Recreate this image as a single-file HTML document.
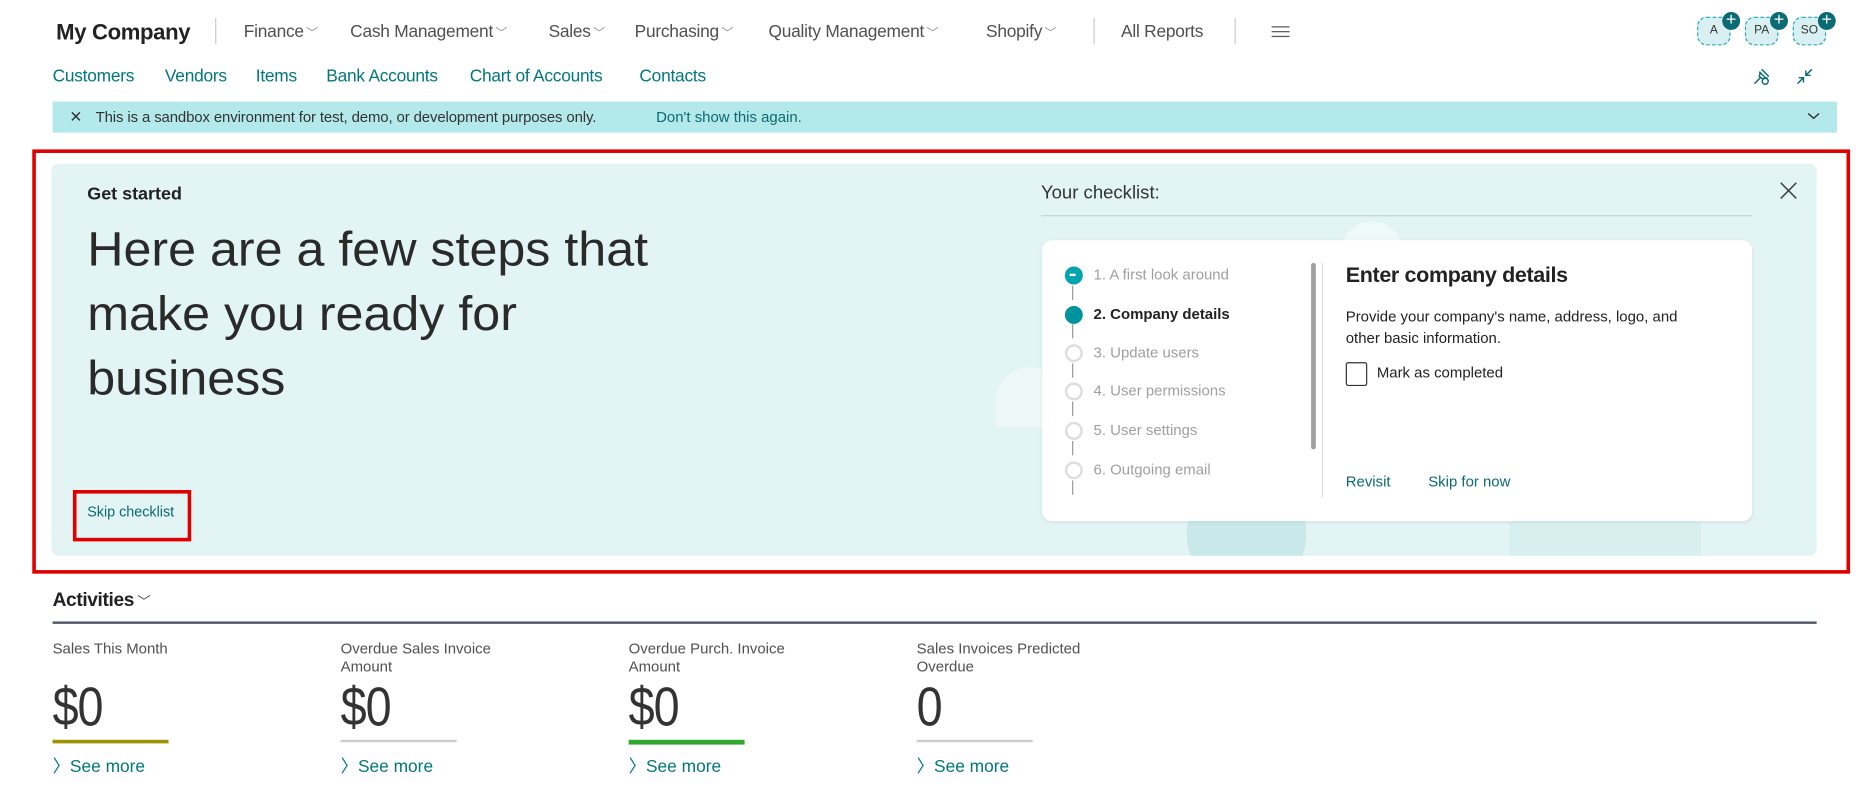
<!DOCTYPE html>
<html><head><meta charset="utf-8"><style>
html,body{margin:0;padding:0;background:#fff;overflow:hidden;width:1874px;height:789px}
#w{position:absolute;left:0;top:0;width:1568px;height:660px;transform:scale(1.19515);transform-origin:0 0;font-family:"Liberation Sans",sans-serif;color:#212121}
.a{position:absolute;white-space:nowrap}
.m{font-size:14.5px;color:#505050;top:19px;letter-spacing:-0.2px}
.m i{font-style:normal;font-size:10px;color:#888;margin-left:2px}
.n{font-size:14.5px;color:#00777d;top:56px;letter-spacing:-0.2px}
.sep{position:absolute;width:1px;background:#ccc;top:15px;height:22px}
.st{font-size:12.5px;color:#a0a0a0;left:915px}
.c{position:absolute;left:891px;width:11px;height:11px;border:2px solid #ddd;border-radius:50%;background:#fff}
.ln{position:absolute;left:897px;width:1px;height:12px;background:#999}
.lab{font-size:12.5px;color:#505050;top:536px}
.val{font-size:46px;color:#333;top:564px;letter-spacing:-1px;transform:scaleX(.85);transform-origin:0 0}
.bar{position:absolute;top:619px;width:97px;height:2px;background:#ccc}
.sm{font-size:14.5px;color:#00777d;top:630px}
.av{position:absolute;top:14px;width:26px;height:22px;background:#d9f0f2;border:1px dashed #1aaab8;border-radius:8px;font-size:10px;color:#333;text-align:center;line-height:22px}
.pl{position:absolute;top:-5px;right:-9px;width:15px;height:15px;border-radius:50%;background:#0b6a72;color:#fff;font-size:15px;line-height:14px;text-align:center}
</style></head><body><div id="w">
<div class="a" style="left:47px;top:16px;font-size:18.5px;font-weight:bold;color:#222;letter-spacing:-0.3px">My Company</div>
<div class="sep" style="left:180px"></div>
<div class="a m" style="left:204px">Finance<i>﹀</i></div>
<div class="a m" style="left:293px">Cash Management<i>﹀</i></div>
<div class="a m" style="left:459px">Sales<i>﹀</i></div>
<div class="a m" style="left:531px">Purchasing<i>﹀</i></div>
<div class="a m" style="left:643px">Quality Management<i>﹀</i></div>
<div class="a m" style="left:825px">Shopify<i>﹀</i></div>
<div class="sep" style="left:915px"></div>
<div class="a m" style="left:938px">All Reports</div>
<div class="sep" style="left:1033px"></div>
<div class="a" style="left:1064px;top:22px;width:15px;height:1px;background:#555;box-shadow:0 4px 0 #555,0 8px 0 #555"></div>
<div class="av" style="left:1420px">A<div class="pl">+</div></div>
<div class="av" style="left:1460px">PA<div class="pl">+</div></div>
<div class="av" style="left:1500px">SO<div class="pl">+</div></div>
<div class="a n" style="left:44px">Customers</div>
<div class="a n" style="left:138px">Vendors</div>
<div class="a n" style="left:214px">Items</div>
<div class="a n" style="left:273px">Bank Accounts</div>
<div class="a n" style="left:393px">Chart of Accounts</div>
<div class="a n" style="left:535px">Contacts</div>
<svg class="a" style="left:1466px;top:56px" width="16" height="16" viewBox="0 0 16 16" fill="none" stroke="#0b6a72" stroke-width="1.2"><path d="M2 14l5-5M6 4l6 6M8 2l6 6M7 4l-1 4 3 2 4-1"/><circle cx="11" cy="12" r="2.5"/></svg>
<svg class="a" style="left:1502px;top:56px" width="16" height="16" viewBox="0 0 16 16" fill="none" stroke="#0b6a72" stroke-width="1.2"><path d="M14 2l-5 5M9 3v4h4M2 14l5-5M3 9h4v4"/></svg>
<div class="a" style="left:44px;top:85px;width:1493px;height:26px;background:#b3e9ea"></div>
<div class="a" style="left:58px;top:90px;font-size:13px;color:#333">✕</div>
<div class="a" style="left:80px;top:91px;font-size:12.5px;color:#333;letter-spacing:-0.1px">This is a sandbox environment for test, demo, or development purposes only.</div>
<div class="a" style="left:549px;top:91px;font-size:12.5px;color:#0b6a72">Don't show this again.</div>
<svg class="a" style="left:1512px;top:93px" width="11" height="8"><path d="M1 2l4.5 4L10 2" stroke="#333" fill="none" stroke-width="1.2"/></svg>
<div class="a" style="left:27px;top:125px;width:1515px;height:349px;border:3px solid #e00000"></div>
<div class="a" style="left:43px;top:137px;width:1477px;height:328px;background:#e3f4f4;border-radius:6px;overflow:hidden">
 <div class="a" style="left:1080px;top:48px;width:50px;height:50px;border-radius:50%;background:#eef9f9"></div>
 <div class="a" style="left:790px;top:170px;width:60px;height:50px;border-radius:30px 30px 0 0;background:#eef8f8"></div>
 <div class="a" style="left:950px;top:260px;width:100px;height:100px;border-radius:50%;background:#c8e8e9"></div>
 <div class="a" style="left:1220px;top:290px;width:160px;height:40px;background:#d8efef"></div>
</div>
<div class="a" style="left:73px;top:154px;font-size:15px;font-weight:bold;color:#222">Get started</div>
<div class="a" style="left:73px;top:182px;font-size:40px;color:#2a2a2a;line-height:54px;white-space:nowrap;transform:scaleX(1.05);transform-origin:0 0">Here are a few steps that<br>make you ready for<br>business</div>
<div class="a" style="left:61px;top:410px;width:93px;height:37px;border:3px solid #e00000"></div>
<div class="a" style="left:73px;top:421px;font-size:12px;color:#0b6a72">Skip checklist</div>
<div class="a" style="left:871px;top:153px;font-size:15.5px;color:#333">Your checklist:</div>
<div class="a" style="left:871px;top:180px;width:595px;height:1px;background:#c5d5d6"></div>
<svg class="a" style="left:1489px;top:152px" width="15" height="15"><path d="M1 1l13 13M14 1L1 14" stroke="#444" stroke-width="1.3"/></svg>
<div class="a" style="left:872px;top:201px;width:594px;height:235px;background:#fff;border-radius:8px;box-shadow:0 1px 3px rgba(0,0,0,.08)"></div>
<div class="c" style="top:223px;background:#00a3b0;border-color:#00a3b0"></div><div class="a" style="left:895px;top:229px;width:5px;height:2px;background:#fff"></div>
<div class="ln" style="top:239px"></div>
<div class="c" style="top:256px;background:#00959e;border-color:#00959e"></div>
<div class="ln" style="top:271px"></div>
<div class="c" style="top:288px"></div><div class="ln" style="top:304px"></div>
<div class="c" style="top:320px"></div><div class="ln" style="top:336px"></div>
<div class="c" style="top:353px"></div><div class="ln" style="top:369px"></div>
<div class="c" style="top:386px"></div><div class="ln" style="top:402px"></div>
<div class="a st" style="top:223px">1. A first look around</div>
<div class="a st" style="top:256px;color:#222;font-weight:bold">2. Company details</div>
<div class="a st" style="top:288px">3. Update users</div>
<div class="a st" style="top:320px">4. User permissions</div>
<div class="a st" style="top:353px">5. User settings</div>
<div class="a st" style="top:386px">6. Outgoing email</div>
<div class="a" style="left:1097px;top:220px;width:4px;height:156px;background:#a0a0a0;border-radius:2px"></div>
<div class="a" style="left:1106px;top:220px;width:1px;height:196px;background:#ddd"></div>
<div class="a" style="left:1126px;top:220px;font-size:18px;font-weight:bold;color:#222;letter-spacing:-0.3px">Enter company details</div>
<div class="a" style="left:1126px;top:256px;font-size:12.5px;color:#222;line-height:18px">Provide your company's name, address, logo, and<br>other basic information.</div>
<div class="a" style="left:1126px;top:303px;width:16px;height:18px;border:1px solid #333;border-radius:2px"></div>
<div class="a" style="left:1152px;top:305px;font-size:12.5px;color:#222">Mark as completed</div>
<div class="a" style="left:1126px;top:396px;font-size:12.5px;color:#0b6a72">Revisit</div>
<div class="a" style="left:1195px;top:396px;font-size:12.5px;color:#0b6a72">Skip for now</div>
<div class="a" style="left:44px;top:494px;font-size:16px;font-weight:bold;color:#222;letter-spacing:-0.3px">Activities<span style="font-weight:normal;font-size:11px;color:#444"> ﹀</span></div>
<div class="a" style="left:44px;top:520px;width:1476px;height:2px;background:#4d5566"></div>
<div class="a lab" style="left:44px">Sales This Month</div>
<div class="a lab" style="left:285px;line-height:15px">Overdue Sales Invoice<br>Amount</div>
<div class="a lab" style="left:526px;line-height:15px">Overdue Purch. Invoice<br>Amount</div>
<div class="a lab" style="left:767px;line-height:15px">Sales Invoices Predicted<br>Overdue</div>
<div class="a val" style="left:44px">$0</div>
<div class="a val" style="left:285px">$0</div>
<div class="a val" style="left:526px">$0</div>
<div class="a val" style="left:767px">0</div>
<div class="bar" style="left:44px;height:3px;background:#9e9200"></div>
<div class="bar" style="left:285px"></div>
<div class="bar" style="left:526px;height:4px;background:#2ea82e"></div>
<div class="bar" style="left:767px"></div>
<div class="a sm" style="left:44px">〉See more</div>
<div class="a sm" style="left:285px">〉See more</div>
<div class="a sm" style="left:526px">〉See more</div>
<div class="a sm" style="left:767px">〉See more</div>
</div></body></html>
